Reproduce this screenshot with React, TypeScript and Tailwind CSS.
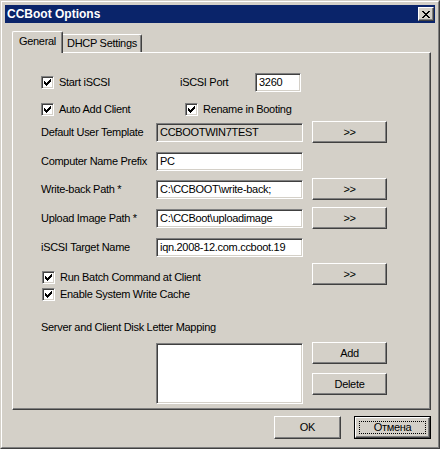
const sunken =
  "border border-t-[#808080] border-l-[#808080] border-r-white border-b-white shadow-[inset_1px_1px_0_#404040,inset_-1px_-1px_0_#d4d0c8]";
const raised =
  "border border-t-white border-l-white border-r-[#404040] border-b-[#404040] shadow-[inset_-1px_-1px_0_#808080]";

function Check() {
  return (
    <span className={`flex h-[13px] w-[13px] shrink-0 items-center justify-center bg-white ${sunken}`}>
      <svg width="7" height="7" viewBox="0 0 7 7" shapeRendering="crispEdges">
        <path
          d="M0 2h1v3H0z M1 3h1v3H1z M2 4h1v3H2z M3 3h1v3H3z M4 2h1v3H4z M5 1h1v3H5z M6 0h1v3H6z"
          fill="#000"
        />
      </svg>
    </span>
  );
}

function CheckLabel({ label, className = "" }: { label: string; className?: string }) {
  return (
    <div className={`flex h-[13px] items-center gap-[5px] ${className}`}>
      <Check />
      <span className="leading-[13px]">{label}</span>
    </div>
  );
}

function Field({ value, disabled = false, className = "w-[147px]" }: { value: string; disabled?: boolean; className?: string }) {
  return (
    <div
      className={`flex h-[19px] items-center px-[3px] leading-[13px] ${disabled ? "bg-[#d4d0c8]" : "bg-white"} ${sunken} ${className}`}
    >
      {value}
    </div>
  );
}

function Btn({ label, className = "w-[75px] h-[22px]" }: { label: string; className?: string }) {
  return (
    <div className={`flex items-center justify-center bg-[#d4d0c8] ${raised} ${className}`}>{label}</div>
  );
}

function FormRow({ label, value, button, className = "" }: { label: string; value: string; button?: boolean; className?: string }) {
  return (
    <div className={`flex h-[22px] items-center ${className}`}>
      <span className="w-[115px] shrink-0">{label}</span>
      <Field value={value} />
      {button && <Btn label=">>" className="ml-[9px] h-[22px] w-[75px]" />}
    </div>
  );
}

export default function App() {
  return (
    <div
      className="h-[449px] w-[440px] border border-t-[#d4d0c8] border-l-[#d4d0c8] border-r-[#404040] border-b-[#404040] bg-[#d4d0c8] text-[11px] tracking-[-0.3px] text-black"
      style={{ fontFamily: '"Liberation Sans", Arial, sans-serif' }}
    >
      <div className="flex h-full flex-col border border-t-white border-l-white border-r-[#808080] border-b-[#808080] p-[3px]">
        {/* title bar */}
        <div className="flex h-[18px] items-center justify-between bg-[#0a246a] pl-[2px] pr-[1px]">
          <span className="text-[12px] font-bold tracking-normal text-white">CCBoot Options</span>
          <div className={`flex h-[14px] w-[16px] items-center justify-center bg-[#d4d0c8] ${raised}`}>
            <svg width="8" height="7" viewBox="0 0 8 7" shapeRendering="crispEdges">
              <path
                d="M0 0h2v1H0z M6 0h2v1H6z M1 1h2v1H1z M5 1h2v1H5z M2 2h4v1H2z M3 3h2v1H3z M2 4h4v1H2z M1 5h2v1H1z M5 5h2v1H5z M0 6h2v1H0z M6 6h2v1H6z"
                fill="#000"
              />
            </svg>
          </div>
        </div>

        <div className="ml-[7px] mt-[8px] w-[419px]">
          {/* tabs */}
          <div className="flex h-[21px] items-end">
            <div className="relative z-10 -mb-px flex h-[22px] w-[51px] items-center justify-center rounded-t-[2px] border-l border-t border-r border-t-white border-l-white border-r-[#404040] bg-[#d4d0c8] pb-[2px] shadow-[inset_-1px_0_0_#808080]">
              General
            </div>
            <div className="flex h-[18px] w-[79px] items-center justify-center rounded-tr-[2px] border-t border-r border-t-white border-r-[#404040] bg-[#d4d0c8] shadow-[inset_-1px_0_0_#808080]">
              DHCP Settings
            </div>
          </div>

          {/* panel */}
          <div className="h-[358px] border border-t-white border-l-white border-r-[#404040] border-b-[#404040] pl-[28px] pt-[20px] shadow-[inset_-1px_-1px_0_#808080]">
            <div className="flex h-[19px] items-center">
              <CheckLabel label="Start iSCSI" className="w-[139px] shrink-0" />
              <span className="w-[75px] shrink-0">iSCSI Port</span>
              <Field value="3260" className="w-[46px]" />
            </div>
            <div className="mt-[8px] flex h-[19px] items-center">
              <CheckLabel label="Auto Add Client" className="w-[144px] shrink-0" />
              <CheckLabel label="Rename in Booting" />
            </div>
            <div className="mt-[2px] flex h-[22px] items-center">
              <span className="w-[115px] shrink-0">Default User Template</span>
              <Field value="CCBOOTWIN7TEST" disabled />
              <Btn label=">>" className="ml-[9px] h-[22px] w-[75px]" />
            </div>
            <FormRow className="mt-[7px]" label="Computer Name Prefix" value="PC" />
            <FormRow className="mt-[6px]" label="Write-back Path *" value="C:\CCBOOT\write-back;" button />
            <FormRow className="mt-[7px]" label="Upload Image Path *" value="C:\CCBoot\uploadimage" button />
            <FormRow className="mt-[7px]" label="iSCSI Target Name" value="iqn.2008-12.com.ccboot.19" />
            <div className="mt-[5px] flex items-start pl-[1px]">
              <CheckLabel label="Run Batch Command at Client" className="mt-[8px] w-[270px] shrink-0" />
              <Btn label=">>" className="h-[22px] w-[75px]" />
            </div>
            <CheckLabel label="Enable System Write Cache" className="mt-[3px] pl-[1px]" />
            <div className="mt-[20px] h-[13px] leading-[13px]">Server and Client Disk Letter Mapping</div>
            <div className="mt-[8px] flex items-start">
              <div className={`ml-[115px] mt-[1px] h-[61px] w-[147px] bg-white ${sunken}`} />
              <div className="ml-[9px] flex flex-col gap-[9px]">
                <Btn label="Add" />
                <Btn label="Delete" />
              </div>
            </div>
          </div>

          {/* dialog buttons */}
          <div className="mt-[6px] flex justify-end gap-[13px]">
            <Btn label="OK" className="h-[23px] w-[67px]" />
            <div className="h-[23px] w-[77px] border border-black">
              <div className={`flex h-full items-center justify-center bg-[#d4d0c8] p-[3px] ${raised}`}>
                <span className="flex h-full w-full items-center justify-center border border-dotted border-black">
                  Отмена
                </span>
              </div>
            </div>
          </div>
        </div>
      </div>
    </div>
  );
}
